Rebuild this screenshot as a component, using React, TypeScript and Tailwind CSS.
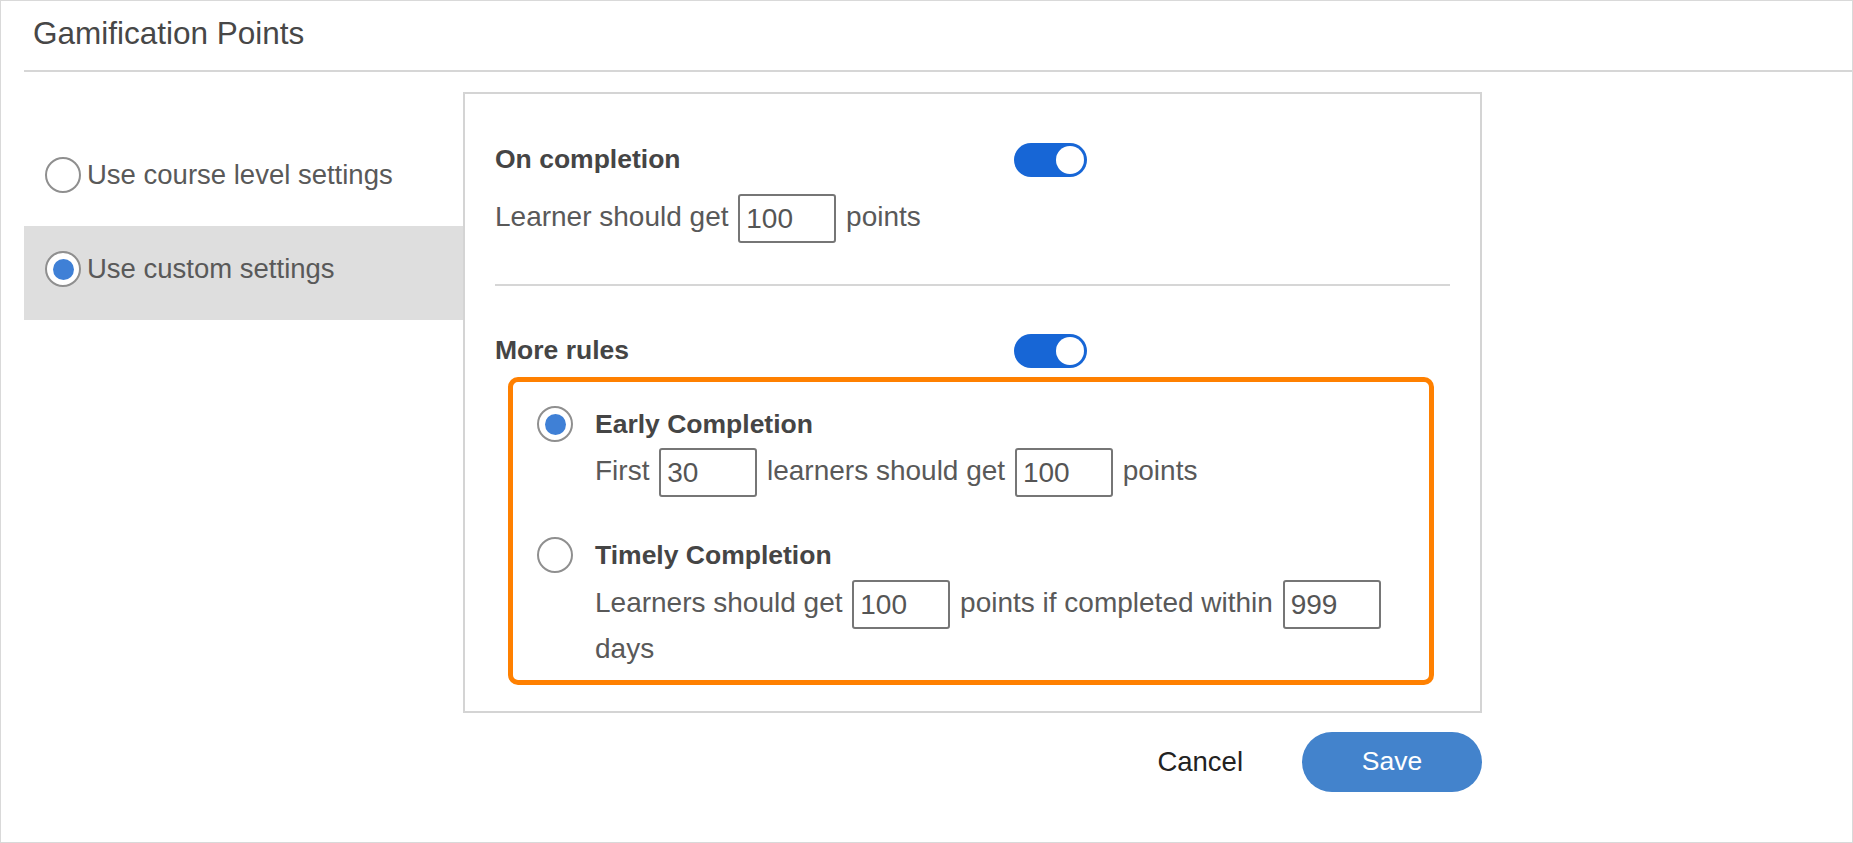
import { useState } from "react";

function Radio({ checked }: { checked: boolean }) {
  return (
    <span className="flex h-[36px] w-[36px] shrink-0 items-center justify-center rounded-full border-2 border-[#8f8f8f] bg-white">
      {checked && <span className="h-[21px] w-[21px] rounded-full bg-[#3f80d6]" />}
    </span>
  );
}

function Toggle({ on }: { on: boolean }) {
  return (
    <span
      className={
        "flex h-[34px] w-[73px] shrink-0 items-center rounded-full px-[3px] " +
        (on ? "justify-end bg-[#1766d6]" : "justify-start bg-[#c4c4c4]")
      }
    >
      <span className="h-[28px] w-[28px] rounded-full bg-white" />
    </span>
  );
}

function NumBox({ value }: { value: string }) {
  return (
    <span className="mx-[2px] inline-block h-[49px] w-[98px] rounded-[3px] border-2 border-[#767676] bg-white pl-[6px] align-middle leading-[45px] text-[#555]">
      {value}
    </span>
  );
}

export default function App() {
  const [mode, setMode] = useState<"course" | "custom">("custom");
  const [rule, setRule] = useState<"early" | "timely">("early");

  return (
    <div
      className="h-[843px] w-full overflow-hidden border border-[#d9d9d9] bg-white text-[28px] text-[#595959]"
      style={{ fontFamily: '"Liberation Sans", Arial, sans-serif' }}
    >
      {/* Header */}
      <div className="ml-[23px] h-[71px] border-b-2 border-[#d6d6d6] pl-[9px] pt-[12px]">
        <h1 className="text-[31.5px] leading-[40px] font-normal text-[#474747]">Gamification Points</h1>
      </div>

      <div className="flex">
        {/* Left options */}
        <div className="ml-[23px] w-[439px] shrink-0 pt-[60px] text-[27.5px]">
          <button
            onClick={() => setMode("course")}
            className={
              "flex h-[94px] w-full items-center gap-[6px] px-[21px] pb-[8px] text-left " +
              (mode === "course" ? "bg-[#dedede]" : "")
            }
          >
            <Radio checked={mode === "course"} />
            <span>Use course level settings</span>
          </button>
          <button
            onClick={() => setMode("custom")}
            className={
              "flex h-[94px] w-full items-center gap-[6px] px-[21px] pb-[8px] text-left " +
              (mode === "custom" ? "bg-[#dedede]" : "")
            }
          >
            <Radio checked={mode === "custom"} />
            <span>Use custom settings</span>
          </button>
        </div>

        {/* Right card */}
        <div className="mt-[20px] w-[1019px] shrink-0">
          <div className="border-2 border-[#d4d4d4] px-[30px] pb-[26px] pt-[49px]">
            <div className="flex h-[34px] items-center">
              <span className="w-[519px] shrink-0 text-[26.5px] font-bold text-[#454545]">On completion</span>
              <Toggle on />
            </div>
            <p className="mt-[17px] leading-[40px]">
              Learner should get <NumBox value="100" /> points
            </p>

            <div className="mt-[41px] h-[2px] bg-[#d6d6d6]" />

            <div className="mt-[48px] flex h-[34px] items-center">
              <span className="w-[519px] shrink-0 text-[26.5px] font-bold text-[#454545]">More rules</span>
              <Toggle on />
            </div>

            <div className="ml-[13px] mt-[9px] w-[926px] rounded-[10px] border-[5px] border-[#ff8000] pb-[11px] pl-[24px] pr-[20px] pt-[24px]">
              <div className="flex cursor-pointer gap-[22px]" onClick={() => setRule("early")}>
                <Radio checked={rule === "early"} />
                <div>
                  <div className="text-[26.5px] leading-[36px] font-bold text-[#454545]">Early Completion</div>
                  <p className="mt-[6px] leading-[40px]">
                    First <NumBox value="30" /> learners should get <NumBox value="100" /> points
                  </p>
                </div>
              </div>

              <div className="mt-[40px] flex cursor-pointer gap-[22px]" onClick={() => setRule("timely")}>
                <Radio checked={rule === "timely"} />
                <div className="min-w-0 flex-1">
                  <div className="text-[26.5px] leading-[36px] font-bold text-[#454545]">Timely Completion</div>
                  <p className="mt-[7px] leading-[40px]">
                    Learners should get <NumBox value="100" /> points if completed within <NumBox value="999" /> days
                  </p>
                </div>
              </div>
            </div>
          </div>

          {/* Footer actions */}
          <div className="mt-[19px] flex items-center justify-end gap-[59px]">
            <button className="text-[27.5px] text-[#222]">Cancel</button>
            <button className="h-[60px] w-[180px] rounded-full bg-[#4383cc] text-[26.5px] text-white">Save</button>
          </div>
        </div>
      </div>
    </div>
  );
}
